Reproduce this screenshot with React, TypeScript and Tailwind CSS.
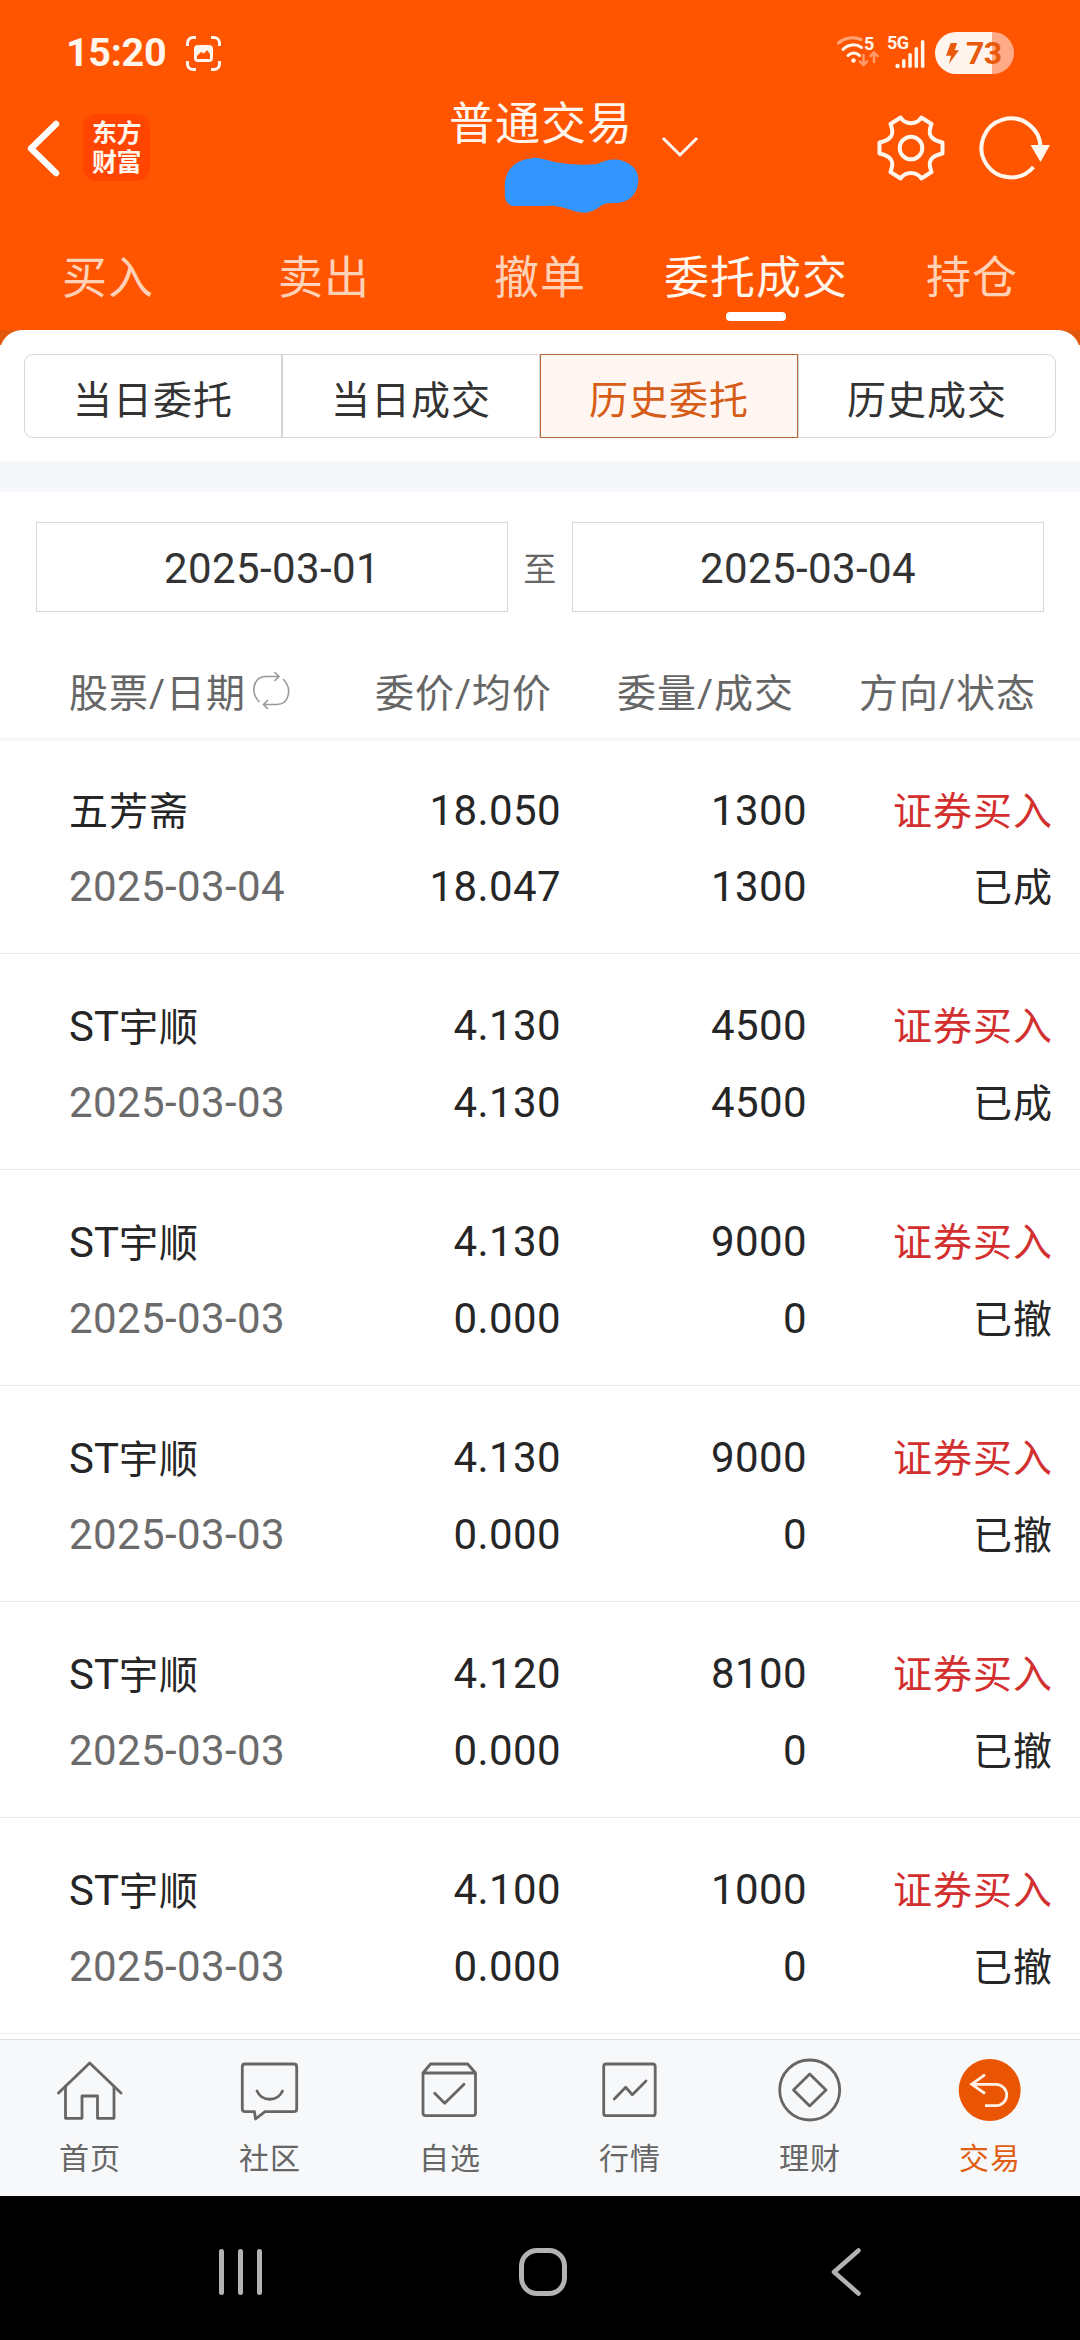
import type { ReactNode } from 'react';
import clsx from 'clsx';

type Order = {
  prefix?: string;
  name: string;
  date: string;
  price: string;
  avgPrice: string;
  amount: string;
  filled: string;
  status: string;
};

const mainTabs = ['买入', '卖出', '撤单', '委托成交', '持仓'];
const subTabs = ['当日委托', '当日成交', '历史委托', '历史成交'];

const orders: Order[] = [
  { name: '五芳斋', date: '2025-03-04', price: '18.050', avgPrice: '18.047', amount: '1300', filled: '1300', status: '已成' },
  { prefix: 'ST', name: '宇顺', date: '2025-03-03', price: '4.130', avgPrice: '4.130', amount: '4500', filled: '4500', status: '已成' },
  { prefix: 'ST', name: '宇顺', date: '2025-03-03', price: '4.130', avgPrice: '0.000', amount: '9000', filled: '0', status: '已撤' },
  { prefix: 'ST', name: '宇顺', date: '2025-03-03', price: '4.130', avgPrice: '0.000', amount: '9000', filled: '0', status: '已撤' },
  { prefix: 'ST', name: '宇顺', date: '2025-03-03', price: '4.120', avgPrice: '0.000', amount: '8100', filled: '0', status: '已撤' },
  { prefix: 'ST', name: '宇顺', date: '2025-03-03', price: '4.100', avgPrice: '0.000', amount: '1000', filled: '0', status: '已撤' },
];

function StatusBar() {
  return (
    <div className="flex h-[106px] items-center pl-[66px] pr-[66px] text-[#fff6ee]">
      <span className="w-[120px] text-[39.5px] font-bold leading-none tracking-[-0.3px]">15:20</span>
      <svg width="35" height="35" viewBox="0 0 35 35" fill="none" stroke="currentColor" strokeWidth="3">
        <path d="M1.5 10V7a5.5 5.5 0 0 1 5.5-5.5h3M25 1.5h3A5.5 5.5 0 0 1 33.500 7v3M33.500 25v3a5.500 5.500 0 0 1-5.500 5.500h-3M10 33.500H7A5.500 5.500 0 0 1 1.500 28v-3" />
        <rect x="8" y="9" width="19" height="17" rx="4" fill="currentColor" stroke="none" />
        <path d="M11 20l4-4 3 1.500 3-3.500 3 4v5H11z" fill="#ff5500" stroke="none" />
      </svg>

      <div className="ml-auto flex items-center">
        <svg width="42" height="34" viewBox="0 0 42 34" fill="none" stroke="currentColor" strokeWidth="3" strokeLinecap="round" className="mr-[8px] overflow-visible">
          <path d="M1.500 7C8 1.500 17 .5 24 3.500" stroke="#ffa477" />
          <path d="M6 13.500C11 8 19 7.500 24.500 11.500" />
          <path d="M11 19.500c3.500-3.500 8-3.500 11.500 0" />
          <circle cx="16.500" cy="24.500" r="2.200" fill="currentColor" stroke="none" />
          <path d="M26.500 19v10M23 25.500l3.500 3.500 3.500-3.500M37 26V17M33.500 20l3.500-3.500 3.500 3.500" stroke="#ff9a68" strokeWidth="2.500" />
          <text x="27" y="14" fontSize="18" fontWeight="700" fill="currentColor" stroke="none">5</text>
        </svg>
        <div className="relative mr-[10px] h-[38px] w-[38px]">
          <span className="absolute -top-px left-0 text-[18px] font-bold leading-[20px] tracking-[-0.5px]">5G</span>
          <svg width="38" height="34" viewBox="0 0 38 34" fill="currentColor" className="mt-[2px]">
            <circle cx="10.500" cy="30" r="2.200" />
            <rect x="15" y="23" width="3.500" height="9" rx="1.700" />
            <rect x="21.300" y="17" width="3.500" height="15" rx="1.700" />
            <rect x="27.600" y="11" width="3.500" height="21" rx="1.700" />
            <rect x="33.900" y="4" width="3.500" height="28" rx="1.700" />
          </svg>
        </div>
        <div className="flex h-[42px] w-[79px] items-center rounded-full bg-[linear-gradient(90deg,#fff4ee_57px,#ffab87_57px)] pl-[10px] text-[#e8590c]">
          <svg width="15" height="22" viewBox="0 0 16 24" fill="currentColor">
            <path d="M6 1h7l-2.500 8H15L4 24l2.500-9H1z" />
          </svg>
          <span className="ml-[6px] text-[32px] font-bold leading-none tracking-[-0.5px]">73</span>
        </div>
      </div>
    </div>
  );
}

function Header() {
  return (
    <div className="flex h-[124px] text-[#fff6ee]">
      <svg width="34" height="57" viewBox="0 0 34 57" fill="none" stroke="white" strokeWidth="6.500" strokeLinecap="round" strokeLinejoin="round" className="ml-[26px] mt-[14px]">
        <path d="M30 4L5 28.500L30 53" />
      </svg>
      <div className="ml-[23px] mt-[8px] flex h-[67px] w-[67px] flex-col items-center justify-center rounded-[13px] bg-[#ff4500] pt-px text-[25px] font-bold leading-[29px] tracking-[-0.5px]">
        <span>东方</span>
        <span>财富</span>
      </div>
      <div className="ml-[299px] w-[190px]">
        <div className="-mt-[4px] h-[46px] text-[45px] leading-[46px] tracking-[1px]">普通交易</div>
        <svg width="136" height="58" viewBox="0 0 136 58" className="ml-[55px] mt-[9px]" fill="#3395ff">
          <path d="M29 1C38 0 45 5 57 6C70 8 82 8 93 7C101 3 111 1 119 4C131 8 136 17 134 27C132 39 124 46 110 46C101 46 99 47 94 51C86 56 80 57 70 54C60 51 53 48 42 49H11C4 49 0 44 1 34C-1 15 9 3 29 1Z" />
        </svg>
      </div>
      <svg width="38" height="22" viewBox="0 0 38 22" fill="none" stroke="currentColor" strokeWidth="3" className="ml-[22px] mt-[30px]">
        <path d="M2 2l17 17L36 2" />
      </svg>
      <svg width="68" height="66" viewBox="0 0 68 66" fill="none" stroke="currentColor" strokeWidth="4" strokeLinejoin="round" className="ml-[178px] mt-[9px]">
        <path d="M23.700 2.500C28 10 40 10 44.300 2.500L54.500 9C50 20 54 25 65.500 27.500V38.500C54 41 50 46 54.500 57L44.300 63.500C40 56 28 56 23.700 63.500L13.500 57C18 46 14 41 2.500 38.500V27.500C14 25 18 20 13.500 9Z" />
        <circle cx="34" cy="33" r="11.300" />
      </svg>
      <svg width="72" height="66" viewBox="0 0 72 66" fill="none" stroke="currentColor" strokeWidth="4" className="ml-[34px] mt-[9px]">
        <path d="M54.500 52A29.500 29.500 0 1 1 61.500 33" />
        <path d="M51.500 30H71L61.500 47Z" fill="currentColor" stroke="none" />
      </svg>
    </div>
  );
}

function SwapIcon() {
  return (
    <svg width="38" height="38" viewBox="0 0 38 38" fill="none" stroke="#999999" strokeWidth="1.600" className="-mt-[8px] ml-[6px]">
      <path d="M7.500 31C-2 22 1 5.500 14 5.500H27M22.500 1l4.500 4.500-4.500 4.500M31 8C40.500 17 37.500 33.500 24.500 33.500H11.500M16 29l-4.500 4.500 4.500 4.500" />
    </svg>
  );
}

function OrderRow({ order }: { order: Order }) {
  return (
    <div className="grid h-[216px] grid-cols-[300px_192px_246px_246px] content-center gap-y-[19px] border-b border-[#ebebeb] pl-[69px] pt-[5px] text-[42px] leading-[57px] tracking-[0.4px] text-[#262626]">
      <div className="pt-[3px] text-[39px] leading-[54px] tracking-[1px]">
        {order.prefix && <span className="text-[42px] tracking-normal">{order.prefix}</span>}
        {order.name}
      </div>
      <div className="text-right">{order.price}</div>
      <div className="text-right">{order.amount}</div>
      <div className="pt-[3px] text-right text-[39px] leading-[54px] tracking-[1px] text-[#d32f2f]">证券买入</div>
      <div className="text-[#6b6b6b]">{order.date}</div>
      <div className="text-right">{order.avgPrice}</div>
      <div className="text-right">{order.filled}</div>
      <div className="pt-[3px] text-right text-[39px] leading-[54px] tracking-[1px]">{order.status}</div>
    </div>
  );
}

const navItems: { label: string; icon: ReactNode }[] = [
  {
    label: '首页',
    icon: (
      <>
        <path d="M4.500 39L35.700 9L67 39" />
        <path d="M11.500 32.500V64.300H28V42H43.500V64.300H60V32.500" />
      </>
    ),
  },
  {
    label: '社区',
    icon: (
      <>
        <path d="M11 10H60Q62.700 10 62.700 13V55Q62.700 57.700 60 57.700H31L21.500 65L20.500 57.700H11Q8.300 57.700 8.300 55V13Q8.300 10 11 10Z" />
        <path d="M23 37C28 48 43.500 48 48.500 37" />
      </>
    ),
  },
  {
    label: '自选',
    icon: (
      <>
        <path d="M9 19L16.500 10H53.700L61.500 19V59Q61.500 61.700 59 61.700H11.500Q9 61.700 9 59ZM9 19H61.500" />
        <path d="M20.700 39.300L30.700 49.300L50 30.300" />
      </>
    ),
  },
  {
    label: '行情',
    icon: (
      <>
        <rect x="9.700" y="10" width="51.500" height="51.700" rx="2.500" />
        <path d="M20.300 45L31.700 33.300L38.300 40.700L52 27" />
      </>
    ),
  },
  {
    label: '理财',
    icon: (
      <>
        <circle cx="35.700" cy="36" r="30" />
        <path d="M35.700 20L52 36L35.700 52L19.500 36Z" />
      </>
    ),
  },
  {
    label: '交易',
    icon: (
      <>
        <circle cx="35.700" cy="36" r="31" fill="#ea5504" stroke="none" />
        <path d="M31 20.700L17.700 30.300L31 39.500M18 30.300H42A10.700 10.700 0 0 1 42 51.700H31" stroke="#fff0e6" strokeLinecap="butt" strokeLinejoin="miter" />
      </>
    ),
  },
];

export default function App() {
  const activeTab = '委托成交';
  const activeSubTab = '历史委托';

  return (
    <div className="flex h-[2340px] w-[1080px] flex-col overflow-hidden bg-white font-['Roboto','Noto_Sans_CJK_SC',sans-serif]">
      <div className="h-[330px] shrink-0 bg-[#ff5500]">
        <StatusBar />
        <Header />
        <div className="grid h-[100px] grid-cols-5">
          {mainTabs.map((tab) => (
            <div key={tab} className="flex flex-col items-center pt-[21px]">
              <span className={clsx('text-[45px] leading-[56px] tracking-[1px]', tab === activeTab ? 'text-[#fff6ee]' : 'text-[#ffd2b8]')}>
                {tab}
              </span>
              {tab === activeTab && <div className="mt-[5px] h-[9px] w-[60px] rounded-[4px] bg-white" />}
            </div>
          ))}
        </div>
      </div>

      {/* Sub tabs */}
      <div className="shrink-0 bg-[linear-gradient(#e2570c_15px,#ffffff_15px)]">
        <div className="h-[131px] rounded-t-[22px] bg-white px-[24px] pt-[24px]">
          <div className="grid h-[84px] grid-cols-4">
            {subTabs.map((tab) => (
              <div
                key={tab}
                className={clsx(
                  'flex items-center justify-center border pt-[9px] text-[39px] leading-[54px] tracking-[1px] first:rounded-l-[9px] last:rounded-r-[9px]',
                  tab === activeSubTab ? 'border-[#b8683a] bg-[#fff6f2] text-[#d65d17]' : 'border-[#d3d6d8] text-[#333333]'
                )}
              >
                {tab}
              </div>
            ))}
          </div>
        </div>
      </div>
      <div className="h-[31px] shrink-0 bg-[#f6f7fa]" />

      {/* Date range */}
      <div className="flex h-[120px] shrink-0 items-end px-[36px] text-[42px] tracking-[0.4px] text-[#333333]">
        <div className="flex h-[90px] w-[472px] items-center justify-center border border-[#d5d7d9] pt-[3px]">2025-03-01</div>
        <div className="flex h-[90px] w-[64px] items-center justify-center pt-[6px] text-[33px] text-[#666666]">至</div>
        <div className="flex h-[90px] w-[472px] items-center justify-center border border-[#d5d7d9] pt-[3px]">2025-03-04</div>
      </div>

      {/* Table header */}
      <div className="flex h-[129px] shrink-0 items-center border-b-[3px] border-[#f6f8f8] pl-[69px] pt-[38px] text-[39px] tracking-[1px] text-[#666666]">
        <div className="flex w-[306px] items-center">
          股票/日期
          <SwapIcon />
        </div>
        <div className="w-[242px]">委价/均价</div>
        <div className="w-[242px]">委量/成交</div>
        <div>方向/状态</div>
      </div>

      <div className="-mt-[3px] h-[1301px] shrink-0">
        {orders.map((order, i) => (
          <OrderRow key={i} order={order} />
        ))}
      </div>

      {/* Bottom navigation */}
      <div className="grid h-[157px] shrink-0 grid-cols-6 border-t border-[#e0e0e0] bg-[#f7f8fa]">
        {navItems.map(({ label, icon }, i) => (
          <div key={label} className={clsx('flex flex-col items-center pt-[14px]', i === 5 ? 'text-[#e05f14]' : 'text-[#666666]')}>
            <svg width="72" height="72" viewBox="0 0 72 72" fill="none" stroke="currentColor" strokeWidth="2.800" strokeLinecap="round" strokeLinejoin="round">
              {icon}
            </svg>
            <span className="mt-[13px] text-[30px] leading-[40px] tracking-[1px]">{label}</span>
          </div>
        ))}
      </div>

      {/* System keys */}
      <div className="flex h-[144px] shrink-0 items-center bg-black pb-px pt-[9px] text-[#b3b3b3]">
        <div className="ml-[219px] flex gap-[14.500px]">
          <div className="h-[46px] w-[4.500px] rounded-full bg-current" />
          <div className="h-[46px] w-[4.500px] rounded-full bg-current" />
          <div className="h-[46px] w-[4.500px] rounded-full bg-current" />
        </div>
        <div className="ml-[257px] h-[48px] w-[48px] rounded-[18px] border-[5px] border-current" />
        <svg width="30" height="48" viewBox="0 0 30 48" fill="none" stroke="currentColor" strokeWidth="4.500" strokeLinecap="round" strokeLinejoin="round" className="ml-[264px]">
          <path d="M27.500 2.500L3 24L27.500 45.500" />
        </svg>
      </div>
    </div>
  );
}
